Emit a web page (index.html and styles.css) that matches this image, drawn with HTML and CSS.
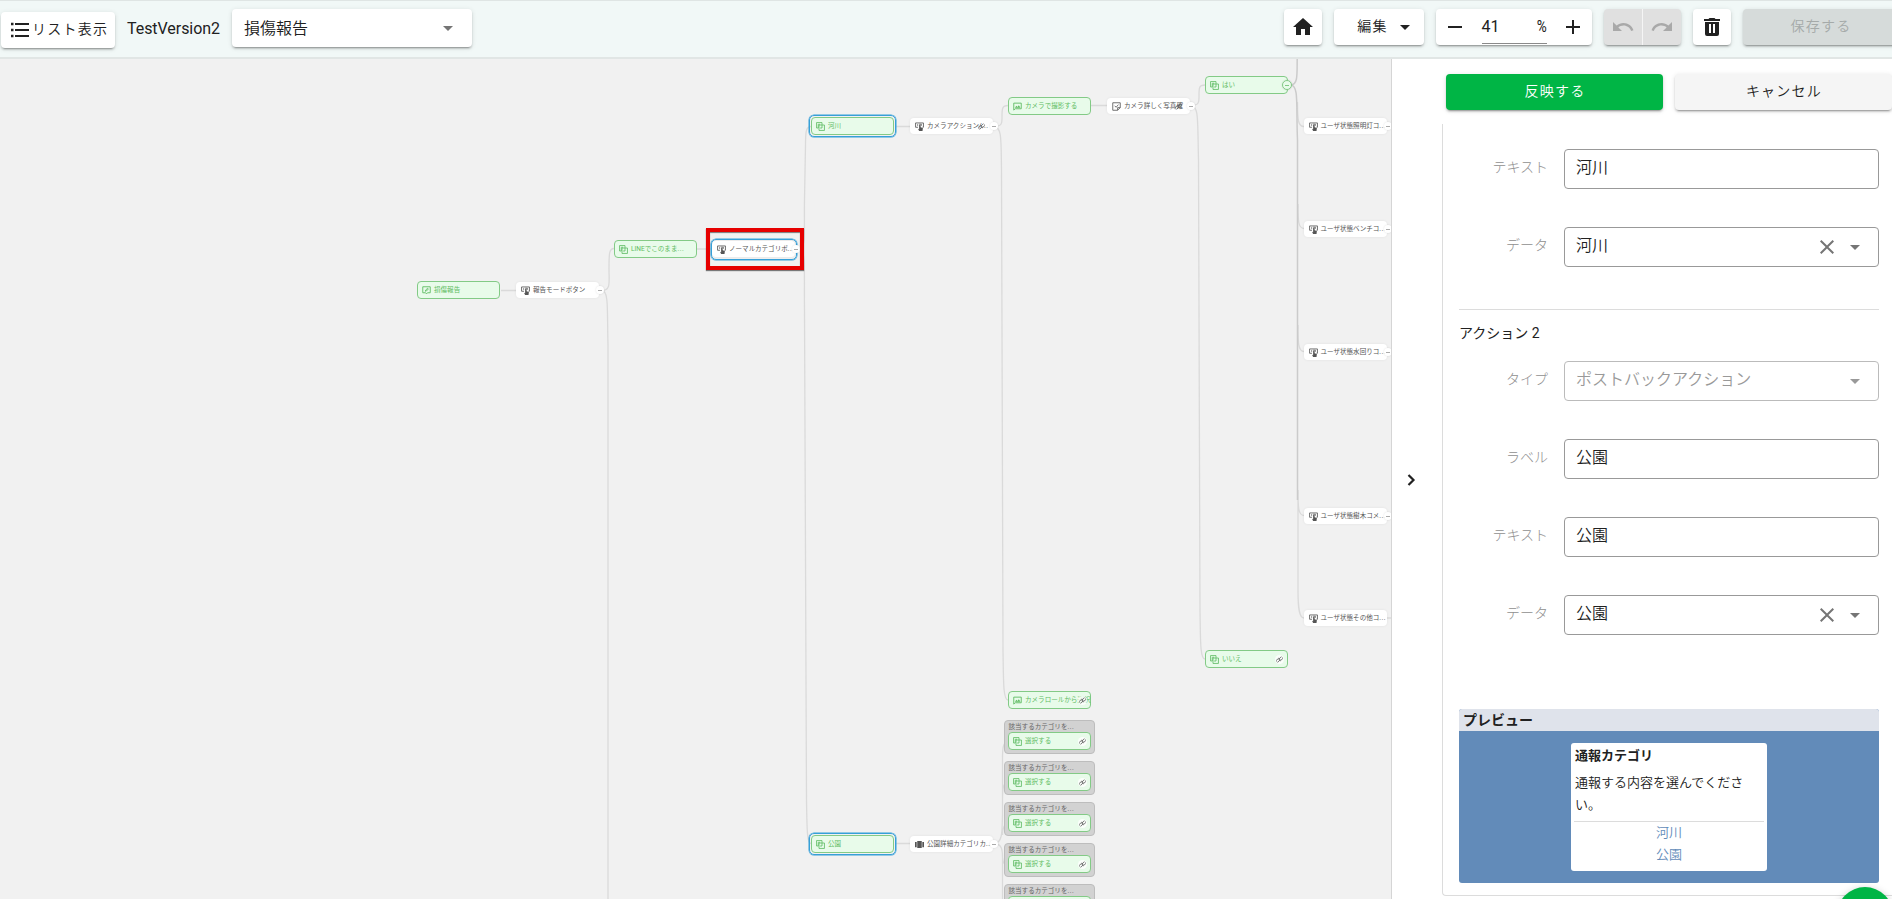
FILE: index.html
```html
<!DOCTYPE html>
<html lang="ja">
<head>
<meta charset="utf-8">
<title>TestVersion2</title>
<link rel="stylesheet" href="styles.css">
</head>
<body>
<svg class="defs" width="0" height="0">
  <symbol id="i-copy" viewBox="0 0 24 24"><path fill="none" stroke="currentColor" stroke-width="2.200" d="M6 16H1.500V1.500H16V6M8 8h14.500v14.500H8zM6 16v-5M11 6H6v5M16 6v10h-5"/></symbol>
  <symbol id="i-edit" viewBox="0 0 24 24"><path fill="none" stroke="currentColor" stroke-width="2.400" d="M2 2h20v16h-7.500L12 21l-2.500-3H2zM9 14l.5-3L15 6l2 2-5.500 5.500z"/></symbol>
  <symbol id="i-image" viewBox="0 0 24 24"><path fill="none" stroke="currentColor" stroke-width="2.400" d="M2 3h20v15H6l-4 3.500z"/><path fill="currentColor" d="M5 15l4-5 3 3 3.500-4.500L20 15z"/></symbol>
  <symbol id="i-touch" viewBox="0 0 24 24"><path fill="none" stroke="currentColor" stroke-width="2.200" d="M8 14H1.500V2.500h21V14H20M7 6v4M11 6h6v4"/><path fill="currentColor" d="M11 8h4v6l6 2-1 8h-9l-3-6 3 1z"/></symbol>
  <symbol id="i-note" viewBox="0 0 24 24"><path fill="none" stroke="currentColor" stroke-width="2.200" d="M2 2h20v13l-7 7H2zM15 22v-7h7M7 10l4 4 6-7"/></symbol>
  <symbol id="i-carousel" viewBox="0 0 24 24"><path fill="currentColor" d="M6 2.500h12v19H6zM0 5h4.500v14H0zM19.500 5H24v14h-4.500z"/></symbol>
  <symbol id="i-link" viewBox="0 0 24 24"><g fill="none" stroke="currentColor" stroke-width="2.600" transform="rotate(-50 12 12)"><rect x="-1" y="6" width="15" height="8" rx="4"/><rect x="10" y="10" width="15" height="8" rx="4"/></g></symbol>
  <symbol id="i-down" viewBox="0 0 24 24"><path fill="currentColor" d="M7 10l5 5 5-5z"/></symbol>
  <symbol id="i-close" viewBox="0 0 24 24"><path fill="currentColor" d="M19 6.410L17.590 5 12 10.590 6.410 5 5 6.410 10.590 12 5 17.590 6.410 19 12 13.410 17.590 19 19 17.590 13.410 12z"/></symbol>
</svg>

<header class="bar">
  <button class="btn list"><svg class="list-icon" width="20" height="18" viewBox="0 0 20 18"><path fill="currentColor" d="M5 2h14v2H5zM5 8h14v2H5zM5 14h14v2H5zM1 1.700h2.500v2.500H1zM1 7.700h2.500v2.500H1zM1 13.700h2.500v2.500H1z"/></svg>リスト表示</button>
  <span class="version">TestVersion2</span>
  <div class="btn scenario"><span>損傷報告</span><svg class="arrow" width="24" height="24"><use href="#i-down"/></svg></div>
  <div class="tools">
    <button class="btn square"><svg width="24" height="24" viewBox="0 0 24 24"><path fill="currentColor" d="M10 20v-6h4v6h5v-8h3L12 3 2 12h3v8z"/></svg></button>
    <button class="btn edit"><span>編集</span><svg width="24" height="24"><use href="#i-down"/></svg></button>
    <div class="btn zoom">
      <svg width="24" height="24" viewBox="0 0 24 24"><path fill="currentColor" d="M5 11h14v2H5z"/></svg>
      <div class="percent"><span>41</span><span>%</span></div>
      <svg width="24" height="24" viewBox="0 0 24 24"><path fill="currentColor" d="M19 13h-6v6h-2v-6H5v-2h6V5h2v6h6z"/></svg>
    </div>
    <div class="btn history">
      <span><svg width="24" height="24" viewBox="0 0 24 24"><path fill="currentColor" d="M12.500 8c-2.650 0-5.050.99-6.900 2.600L2 7v9h9l-3.620-3.620c1.390-1.160 3.160-1.880 5.120-1.880 3.540 0 6.550 2.310 7.600 5.500l2.370-.78C21.080 11.030 17.150 8 12.500 8z"/></svg></span>
      <span><svg width="24" height="24" viewBox="0 0 24 24"><path fill="currentColor" d="M18.400 10.600C16.550 8.990 14.150 8 11.500 8c-4.650 0-8.580 3.030-9.960 7.220L3.900 16c1.050-3.190 4.050-5.500 7.600-5.500 1.950 0 3.730.72 5.120 1.880L13 16h9V7z"/></svg></span>
    </div>
    <button class="btn square"><svg width="24" height="24" viewBox="0 0 24 24"><path fill="currentColor" fill-rule="evenodd" d="M4 4h4.500l1-1h5l1 1H20v2H4zM5 7h14v12a2 2 0 0 1-2 2H7a2 2 0 0 1-2-2zM9 9v9h2V9zM13 9v9h2V9z"/></svg></button>
    <button class="btn save">保存する</button>
  </div>
</header>

<main class="main">
  <section class="canvas" id="canvas">
    <svg class="wires" width="1391" height="840" viewBox="0 59 1391 840">
      <path d="M501 290.500H516M602 290.500C611 290.500 609 282 609 269C609 254 609 248.500 614 248.500M602 290.500C609 291 607 310 608 345V899"/>
      <path d="M697 249H712M800 249C806 247 804 230 804.500 200L805.500 145C805.500 132 806 126.500 811 126.500M800 249C806 252 804 270 804.500 310L806.500 800C807 830 807 843.500 811 843.500"/>
      <path d="M896 126.500H910M994 126.500C1003 126.500 1002 122 1002 116C1002 109 1002 105.500 1008 105.500M994 126.500C1002 127 1001 140 1001.500 170L1003 650C1003.500 680 1003 700 1008 700"/>
      <path d="M1091 105.500H1107M1191 105.500C1200 105.500 1199 101 1199 95C1199 88 1199 85 1205 85M1191 105.500C1199 106 1197.500 120 1198.500 160L1200 610C1200.500 640 1200 659 1205 659"/>
      <path d="M1298 500V590C1298 608 1299 618 1304 618M1297.500 102C1297.500 120 1298 126.500 1304 126.500M1298 204C1298 220 1298 228.500 1304 228.500M1298 325C1298 342 1298 351.500 1304 351.500M1298 490C1298 506 1298 515.500 1304 515.500M1387 618H1391"/>
      <path class="strong" d="M1291 85C1298 84 1297 75 1297.200 59M1291 85C1299 86 1296 105 1297.500 140V500"/>
      <path d="M896 843.500H910M994 843.500C1003 843.500 1002 830 1002.500 815V759C1002.500 748 1003 742 1008 742M1002.500 800C1002.500 788 1003 783 1008 783M1002.500 835C1002.500 827 1004 824 1008 824M994 843.500C1002 844 1002.500 850 1002.500 857C1003 863 1004 865 1008 865M1002.500 855V899"/>
    </svg>
  </section>

  <aside class="toggle"><svg width="24" height="24" viewBox="0 0 24 24"><path fill="none" stroke="currentColor" stroke-width="2.200" d="M9.500 8l5 5-5 5"/></svg></aside>

  <section class="panel">
    <div class="actions"><button class="btn apply">反映する</button><button class="btn cancel">キャンセル</button></div>
    <div class="form">
      <div class="row"><label>テキスト</label><div class="field">河川</div></div>
      <div class="row"><label>データ</label><div class="field"><span>河川</span><svg class="clear" width="24" height="24"><use href="#i-close"/></svg><svg width="24" height="24"><use href="#i-down"/></svg></div></div>
      <h2>アクション 2</h2>
      <div class="row off"><label>タイプ</label><div class="field"><span>ポストバックアクション</span><svg width="24" height="24"><use href="#i-down"/></svg></div></div>
      <div class="row"><label>ラベル</label><div class="field">公園</div></div>
      <div class="row"><label>テキスト</label><div class="field">公園</div></div>
      <div class="row"><label>データ</label><div class="field"><span>公園</span><svg class="clear" width="24" height="24"><use href="#i-close"/></svg><svg width="24" height="24"><use href="#i-down"/></svg></div></div>
      <div class="preview">
        <h3>プレビュー</h3>
        <div class="stage"><div class="card">
          <strong>通報カテゴリ</strong>
          <p>通報する内容を選んでください。</p>
          <div class="choices"><span>河川</span><span>公園</span></div>
        </div></div>
      </div>
    </div>
  </section>
</main>
<div class="fab"></div>
<script src="script.js"></script>
</body>
</html>
```
FILE: styles.css
```css
* { box-sizing: border-box; }
body {
  margin: 0;
  width: 1892px;
  height: 899px;
  overflow: hidden;
  position: relative;
  background: #fff;
  color: #212121;
  font-family: Roboto, "Noto Sans CJK JP", sans-serif;
  font-size: 14px;
  display: flex;
  flex-direction: column;
}
svg { display: block; flex: none; }
.defs { position: absolute; }
button { font: inherit; color: inherit; border: 0; padding: 0; }

.bar {
  height: 59px;
  flex: none;
  display: flex;
  align-items: flex-start;
  padding: 8px 0 0 1px;
  background: #f1f8f7;
  border-top: 1px solid #dfe5e4;
  border-bottom: 2px solid #e1e6e5;
}
.btn {
  height: 36px;
  border-radius: 4px;
  background: #fff;
  box-shadow: 0 3px 1px -2px rgba(0,0,0,.2), 0 2px 2px rgba(0,0,0,.14), 0 1px 5px rgba(0,0,0,.12);
  display: flex;
  align-items: center;
  justify-content: center;
  flex: none;
  letter-spacing: 1.25px;
  font-weight: 350;
}
.list { width: 114px; margin-top: 3px; justify-content: flex-start; padding-left: 9px; gap: 2px; font-size: 14px; padding-bottom: 4px; }
.list-icon { margin-top: 4px; }
.version { width: 92px; margin-left: 12px; font-size: 16px; line-height: 40px; white-space: nowrap; letter-spacing: -.05px; }
.scenario { width: 240px; height: 38px; margin-left: 13px; padding: 0 12px; justify-content: space-between; font-size: 16px; letter-spacing: 0; }
.scenario span { padding-bottom: 2px; }
.arrow { color: #757575; }
.tools { display: flex; gap: 12px; margin-left: 812px; }
.square { width: 38px; padding-right: 1px; }
.edit { width: 90px; padding-left: 16px; gap: 5px; font-weight: 350; }
.edit span { padding-bottom: 4px; }
.zoom { width: 156px; justify-content: space-between; padding: 0 7px; }
.percent { width: 65px; height: 34px; border-bottom: 1px solid #8a8a8a; display: flex; justify-content: space-between; align-items: center; font-size: 16px; font-weight: 400; letter-spacing: 0; margin-bottom: 1px; }
.percent span:last-child { transform: scaleX(.85); transform-origin: right; }
.history { width: 77px; background: #e0e0e0; color: #a9a9a9; }
.history span { flex: 1; height: 36px; display: flex; align-items: center; justify-content: center; }
.history span + span { border-left: 1px solid #f5f5f5; }
.save { width: 156px; background: #d6dbda; color: #a5aaa9; padding-bottom: 5px; border-radius: 4px 0 0 4px; }

.main { flex: 1; display: flex; min-height: 0; }
.canvas { width: 1392px; position: relative; overflow: hidden; background: #f1f1f1; border-right: 1px solid #d5d5d5; }
.wires { position: absolute; left: 0; top: 0; fill: none; stroke: #dadada; stroke-width: 1.300; }
.wires .strong { stroke: #cbcbcb; stroke-width: 1.500; }

/* diagram nodes */
.node {
  position: absolute;
  width: 83px;
  height: 17px;
  border-radius: 4px;
  display: flex;
  align-items: center;
  gap: 3px;
  padding: 0 0 1px 5px;
  font-size: 6.560px;
  line-height: 10px;
  white-space: nowrap;
}
.dots { letter-spacing: .5px; }
.icon { width: 9px; height: 9px; margin-top: 1px; }
.green { background: #e8fbea; border: 1px solid #83ca86; color: #5fbb63; padding-left: 4px; height: 18px; }
.white { background: #fff; color: #555; box-shadow: 0 0 3px rgba(0,0,0,.07); height: 16px; }
.picked::before { content: ""; position: absolute; inset: -3px; border: 1px solid #36a0d8; box-shadow: 0 0 0 .5px #36a0d8; border-radius: 5px; }
.white.picked::before { inset: -2px -2px -3px -1px; }
.knob { position: absolute; right: -5px; top: 4px; width: 8px; height: 8px; border-radius: 50%; background: #fff; box-shadow: 0 0 2px rgba(0,0,0,.12); }
.knob::after { content: ""; position: absolute; left: 2px; top: 3.500px; width: 4px; height: 1px; background: #aaa; }
.green .knob { border: 1px solid #83ca86; background: #e8fbea; width: 10px; height: 10px; right: -5px; top: 3px; }
.green .knob::after { left: 2px; top: 3.500px; background: #83ca86; }
.link { position: absolute; right: 3px; top: 4px; width: 9px; height: 9px; padding: 1px; border-radius: 50%; background: #fffc; color: #555; }
.white .link { right: 7px; top: 4px; background: none; }
.group { position: absolute; width: 91px; height: 34px; border: 1px solid #bdbdbd; border-radius: 4px; background: #d2d2d2; color: #666; font-size: 6.560px; line-height: 10px; padding: 1px 3.500px; white-space: nowrap; }
.marker { position: absolute; left: 706px; top: 169px; width: 98px; height: 42px; border: 4px solid #e60000; box-shadow: 0 1px 1px rgba(0,0,0,.5), inset 0 1px 1px rgba(0,0,0,.5); }

.toggle { width: 50px; display: flex; align-items: center; padding-left: 7px; }
.panel { width: 450px; padding-top: 15px; }
.actions { display: flex; gap: 12px; padding-left: 4px; }
.apply, .cancel { width: 217px; padding: 0 0 4px 1px; font-weight: 350; }
.apply { background: #00b545; color: #fff; }
.cancel { background: #f5f5f5; }
.form { margin-top: 14px; height: 772px; width: 470px; padding: 25px 33px 0 16px; border-left: 1px solid #dcdcdc; border-bottom: 1px solid #dcdcdc; border-radius: 0 0 0 4px; font-weight: 300; }
.row { display: flex; justify-content: space-between; height: 40px; margin-bottom: 38px; }
.row label { width: 89px; text-align: right; color: #8f8f8f; line-height: 37px; }
.field { width: 315px; height: 40px; border: 1px solid #999; border-radius: 4px; padding: 0 11px; font-size: 16px; line-height: 36px; display: flex; font-weight: 350; }
.field span { flex: 1; }
.field svg { color: #757575; margin-top: 7px; }
.field .clear { margin-right: 4px; }
.off .field { color: #999; border-color: #bbb; }
.off .field svg { color: #999; }
h2 { margin: 42px 0 0; height: 52px; padding: 13px 0 0; border-top: 1px solid #dcdcdc; font-size: 14px; line-height: 21px; font-weight: 400; }
.row:has(+ h2) { margin-bottom: 0; }
.preview { margin-top: 74px; height: 174px; border-radius: 3px; overflow: hidden; background: #628bb9; }
h3 { margin: 0; height: 22px; background: #dfe3eb; padding-left: 4px; font-size: 14px; line-height: 22px; font-weight: 700; }
.stage { display: flex; justify-content: center; padding-top: 12px; }
.card { width: 196px; height: 128px; padding: 2px 3px; background: #fff; border-radius: 3px; font-size: 13px; line-height: 22px; }
.card strong { display: block; padding-left: 1px; font-weight: 700; }
.card p { margin: 5px 0; padding: 0 1px; font-weight: 350; }
.choices { border-top: 1px solid #dcdcdc; color: #628bb9; display: flex; flex-direction: column; align-items: center; font-weight: 350; }
.fab { position: absolute; left: 1837px; top: 887px; width: 56px; height: 56px; border-radius: 50%; background: #00b545; box-shadow: 0 3px 8px rgba(0,0,0,.3); }
```
FILE: script.js
```js
const canvas = document.getElementById('canvas');
const TOP = 59;
const icon = (name, cls) => `<svg class="${cls}"><use href="#i-${name}"/></svg>`;
const label = text => text.replace('...', '<span class="dots">...</span>');

// x, y, kind, icon, text, options (k: collapse knob, l: link, p: picked)
const nodes = [
  [417, 281, 'green', 'edit', '損傷報告', ''],
  [516, 282, 'white', 'touch', '報告モードボタン', 'k'],
  [614, 240, 'green', 'copy', 'LINEでこのまま...', ''],
  [712, 241, 'white', 'touch', 'ノーマルカテゴリボ...', 'kp'],
  [811, 117, 'green', 'copy', '河川', 'p'],
  [910, 118, 'white', 'touch', 'カメラアクション/...', 'kl'],
  [1008, 97, 'green', 'image', 'カメラで撮影する', ''],
  [1107, 98, 'white', 'note', 'カメラ詳しく写真確', 'kl'],
  [1205, 76, 'green', 'copy', 'はい', 'k'],
  [1303.5, 118, 'white', 'touch', 'ユーザ状態照明灯コ...', 'k'],
  [1303.5, 221, 'white', 'touch', 'ユーザ状態ベンチコ...', 'k'],
  [1303.5, 344, 'white', 'touch', 'ユーザ状態水回りコ...', 'k'],
  [1303.5, 508, 'white', 'touch', 'ユーザ状態樹木コメ...', 'k'],
  [1303.5, 610, 'white', 'touch', 'ユーザ状態その他コ...', ''],
  [1205, 650, 'green', 'copy', 'いいえ', 'l'],
  [1008, 691, 'green', 'image', 'カメラロールから選択', 'l'],
  [811, 835, 'green', 'copy', '公園', 'p'],
  [910, 836, 'white', 'carousel', '公園詳細カテゴリカ...', 'k']
];

for (let i = 0; i < 5; i++) {
  const y = 720 + i * 41;
  const group = document.createElement('div');
  group.className = 'group';
  group.style.cssText = `left:1004px;top:${y - TOP}px`;
  group.innerHTML = label('該当するカテゴリを...');
  canvas.append(group);
  nodes.push([1008, y + 12, 'green', 'copy', '選択する', 'l']);
}

for (const [x, y, kind, name, text, opts] of nodes) {
  const el = document.createElement('div');
  el.className = `node ${kind}${opts.includes('p') ? ' picked' : ''}`;
  el.style.cssText = `left:${x}px;top:${y - TOP}px`;
  el.innerHTML = icon(name, 'icon') + `<span>${label(text)}</span>` +
    (opts.includes('l') ? icon('link', 'link') : '') +
    (opts.includes('k') ? '<i class="knob"></i>' : '');
  canvas.append(el);
}

const marker = document.createElement('div');
marker.className = 'marker';
canvas.append(marker);
```
